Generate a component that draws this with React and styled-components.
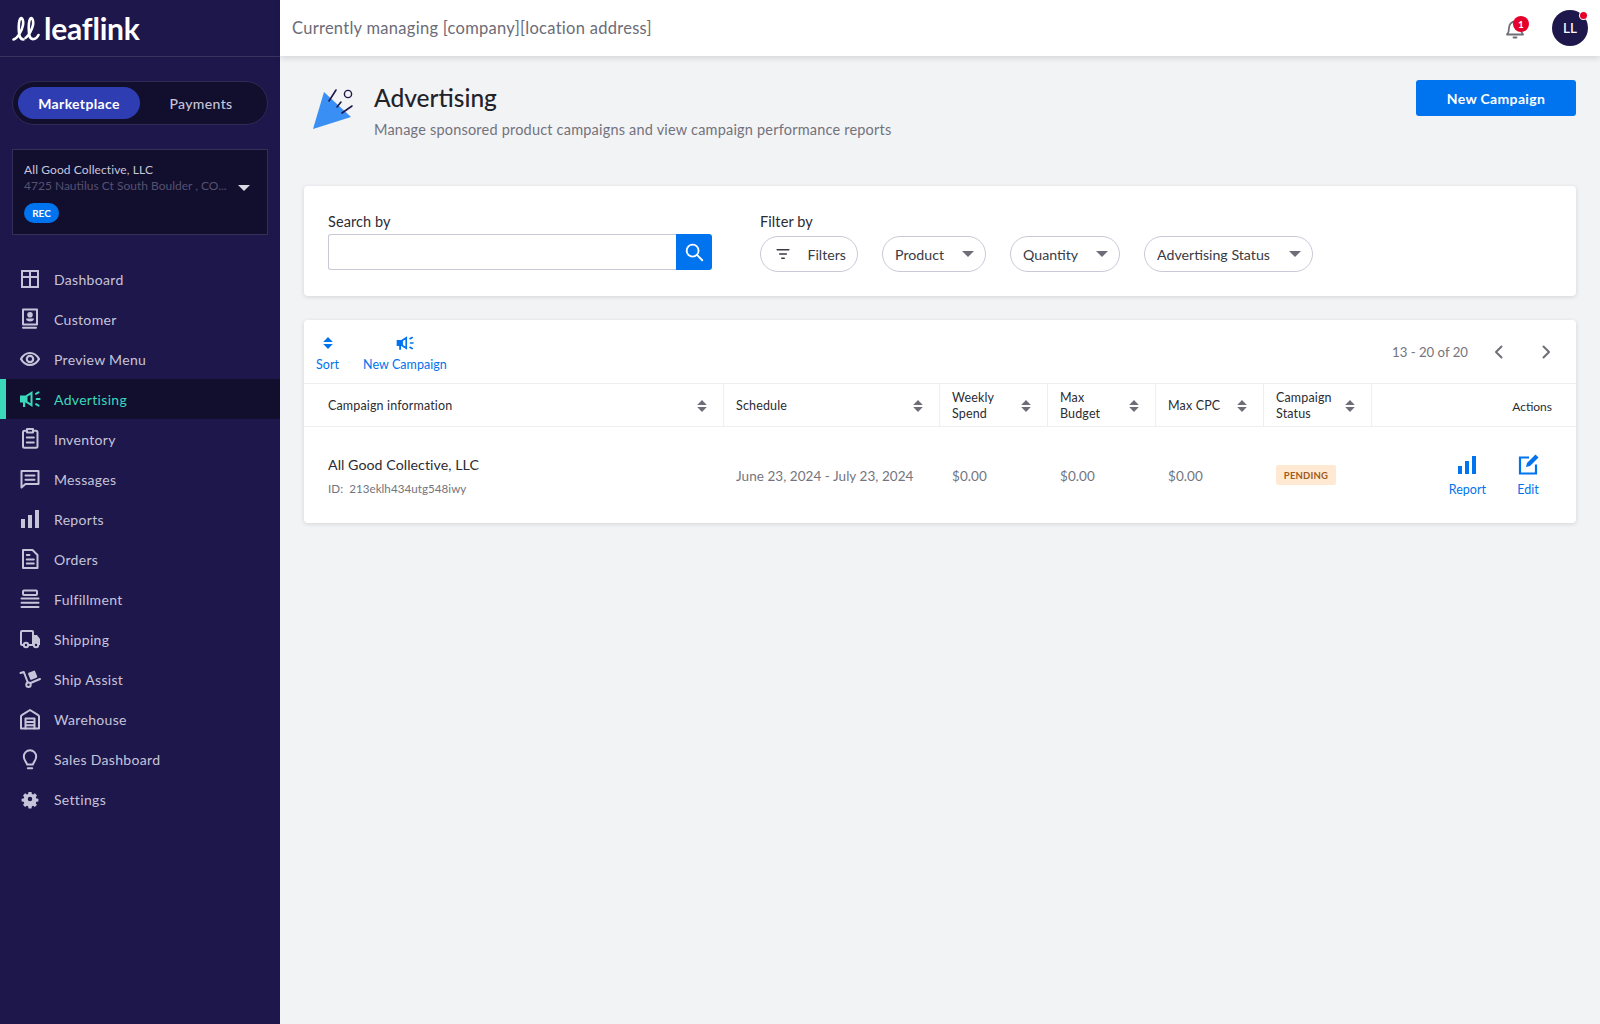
import React from "react";
import styled, { createGlobalStyle } from "styled-components";

const GlobalStyle = createGlobalStyle`
  html, body { margin: 0; padding: 0; height: 100%; }
  body { font-family: "Lato", "Liberation Sans", sans-serif; background: #f2f3f5; color: #22222b; }
  * { box-sizing: border-box; }
`;

const Page = styled.div`
  display: grid;
  grid-template-columns: 280px 1fr;
  height: 1024px;
  overflow: hidden;
`;

const Sidebar = styled.aside`
  background: #1e174b;
  color: #c6c4d9;
  display: flex;
  flex-direction: column;
`;

const LogoBar = styled.div`
  height: 57px;
  padding: 0 0 0 12px;
  display: flex;
  align-items: center;
  gap: 4px;
  border-bottom: 1px solid #38335f;
`;

const LogoText = styled.span`
  color: #fff;
  font-size: 30px;
  font-weight: 700;
  letter-spacing: -0.2px;
  line-height: 1;
`;

const Toggle = styled.div`
  margin: 24px 12px 0;
  height: 44px;
  border-radius: 22px;
  background: #120e2e;
  border: 1px solid #2e2a55;
  padding: 5px;
  display: grid;
  grid-template-columns: 122px 1fr;
`;

const ToggleItem = styled.div`
  display: flex;
  align-items: center;
  justify-content: center;
  padding-top: 1px;
  border-radius: 16px;
  font-size: 14px;
  font-weight: ${(p) => (p.$active ? 700 : 500)};
  color: ${(p) => (p.$active ? "#fff" : "#c6c4d9")};
  background: ${(p) => (p.$active ? "#2f3db3" : "transparent")};
  letter-spacing: 0.35px;
`;

const Account = styled.div`
  position: relative;
  margin: 24px 12px 0;
  height: 86px;
  background: #120e2e;
  border: 1px solid #34305a;
  padding: 12px 11px;
`;

const AccountName = styled.div`
  font-size: 12px;
  line-height: 16px;
  letter-spacing: 0.1px;
  color: #c9c7da;
`;

const AccountAddress = styled.div`
  font-size: 12px;
  line-height: 16px;
  color: #55516f;
`;

const RecPill = styled.span`
  display: inline-flex;
  align-items: center;
  justify-content: center;
  margin-top: 9px;
  width: 35px;
  height: 20px;
  border-radius: 10px;
  background: #0073ee;
  color: #fff;
  font-size: 10px;
  font-weight: 700;
`;

const AccountCaret = styled.span`
  position: absolute;
  right: 17px;
  top: 35px;
  width: 0;
  height: 0;
  border-left: 6px solid transparent;
  border-right: 6px solid transparent;
  border-top: 6px solid #d8d7e3;
`;

const Menu = styled.nav`
  margin-top: 24px;
  display: flex;
  flex-direction: column;
`;

const MenuRow = styled.div`
  height: 40px;
  padding-left: 18px;
  display: flex;
  align-items: center;
  gap: 12px;
  font-size: 14px;
  letter-spacing: 0.32px;
  color: ${(p) => (p.$active ? "#3ad9bb" : "#c6c4d9")};
  background: ${(p) => (p.$active ? "#120e2e" : "transparent")};
  box-shadow: ${(p) => (p.$active ? "inset 6px 0 0 #3ad9bb" : "none")};
`;

const MenuLabel = styled.span`
  margin-top: 1px;
`;

const Svg = styled.svg`
  display: block;
  flex: none;
  width: ${(p) => p.$size || 24}px;
  height: ${(p) => p.$size || 24}px;
  color: ${(p) => p.$color || "currentColor"};
`;

const Main = styled.main`
  display: flex;
  flex-direction: column;
  min-width: 0;
`;

const TopBar = styled.header`
  height: 56px;
  flex: none;
  background: #fff;
  box-shadow: 0 2px 6px rgba(30, 30, 50, 0.14);
  padding: 0 12px;
  display: flex;
  align-items: center;
  justify-content: space-between;
  position: relative;
`;

const Managing = styled.div`
  font-size: 16.5px;
  color: #6c6c77;
  letter-spacing: 0.28px;
`;

const TopRight = styled.div`
  display: flex;
  align-items: center;
  gap: 25px;
`;

const BellWrap = styled.div`
  position: relative;
  width: 24px;
  height: 24px;
  color: #6e6e78;
`;

const BellBadge = styled.span`
  position: absolute;
  top: 0;
  right: -2px;
  width: 16px;
  height: 16px;
  border-radius: 50%;
  background: #e4002b;
  color: #fff;
  font-size: 10px;
  font-weight: 700;
  display: flex;
  align-items: center;
  justify-content: center;
`;

const Avatar = styled.div`
  position: relative;
  width: 36px;
  height: 36px;
  border-radius: 50%;
  background: #1e174b;
  color: #fff;
  font-size: 13.5px;
  font-weight: 500;
  display: flex;
  align-items: center;
  justify-content: center;
  &::after {
    content: "";
    position: absolute;
    top: 2px;
    right: 1px;
    width: 7px;
    height: 7px;
    border-radius: 50%;
    background: #e4002b;
    box-shadow: 0 0 0 1px #fff;
  }
`;

const Content = styled.div`
  padding: 24px 24px 0;
`;

const Head = styled.div`
  height: 106px;
  display: flex;
  align-items: flex-start;
  justify-content: space-between;
`;

const HeadLeft = styled.div`
  display: flex;
  align-items: flex-start;
  gap: 18px;
  padding-left: 8px;
`;

const HeadIcon = styled.svg`
  display: block;
  width: 44px;
  height: 44px;
  margin-top: 8px;
`;

const Title = styled.h1`
  margin: 0;
  font-size: 24.5px;
  line-height: 36px;
  font-weight: 500;
  color: #22222b;
`;

const Subtitle = styled.p`
  margin: 4px 0 0;
  font-size: 14.5px;
  line-height: 20px;
  letter-spacing: 0.2px;
  color: #72727c;
`;

const PrimaryButton = styled.button`
  width: 160px;
  height: 36px;
  border: 0;
  border-radius: 3px;
  background: #0073ee;
  color: #fff;
  font: 700 14px "Lato", sans-serif;
  letter-spacing: 0.35px;
`;

const Card = styled.section`
  background: #fff;
  border-radius: 4px;
  box-shadow: 0 1px 4px rgba(30, 30, 50, 0.14);
`;

const FilterCard = styled(Card)`
  height: 110px;
  padding: 26px 24px 0;
  display: flex;
  gap: 48px;
`;

const FieldLabel = styled.div`
  font-size: 14.5px;
  line-height: 20px;
  letter-spacing: 0.1px;
  color: #2c2c35;
`;

const SearchBox = styled.div`
  margin-top: 2px;
  width: 384px;
  height: 36px;
  display: flex;
`;

const SearchInput = styled.input`
  flex: 1;
  min-width: 0;
  border: 1px solid #c8c9d6;
  border-right: 0;
  border-radius: 3px 0 0 3px;
  background: #fff;
  outline: none;
`;

const SearchButton = styled.button`
  width: 36px;
  border: 0;
  padding: 0;
  border-radius: 0 3px 3px 0;
  background: #0073ee;
  color: #fff;
  display: flex;
  align-items: center;
  justify-content: center;
`;

const Pills = styled.div`
  margin-top: 4px;
  display: flex;
  gap: 24px;
`;

const Pill = styled.div`
  width: ${(p) => p.$width}px;
  height: 36px;
  padding: 0 11px 0 12px;
  border: 1px solid #c8c9d6;
  border-radius: 18px;
  font-size: 14.2px;
  color: #3a3a44;
  display: flex;
  align-items: center;
  justify-content: space-between;
`;

const Caret = styled.span`
  width: 0;
  height: 0;
  border-left: 6px solid transparent;
  border-right: 6px solid transparent;
  border-top: 6px solid #6e6e78;
`;

const TableCard = styled(Card)`
  margin-top: 24px;
`;

const Toolbar = styled.div`
  height: 63px;
  padding: 13px 18px 0 12px;
  display: flex;
  justify-content: space-between;
`;

const ToolGroup = styled.div`
  display: flex;
  gap: 24px;
`;

const ToolItem = styled.div`
  display: flex;
  flex-direction: column;
  align-items: center;
  gap: 4px;
  color: #0073ee;
  font-size: 12.5px;
  line-height: 16px;
  letter-spacing: 0.05px;
`;

const ToolIcon = styled.div`
  height: 20px;
  display: flex;
  align-items: center;
`;

const Pager = styled.div`
  display: flex;
  align-items: center;
  height: 38px;
  color: #74747e;
  font-size: 13.2px;
`;

const PagerButtons = styled.div`
  display: flex;
  gap: 23px;
  margin-left: 19px;
`;

const Grid = styled.div`
  display: grid;
  grid-template-columns: 420px 216px repeat(4, 108px) 1fr;
`;

const HeadRow = styled(Grid)`
  height: 44px;
  border-top: 1px solid #eeeff1;
  border-bottom: 1px solid #eeeff1;
`;

const HeadCell = styled.div`
  padding: 2px 15px 0 ${(p) => (p.$first ? 24 : 12)}px;
  border-right: 1px solid #eeeff1;
  display: flex;
  align-items: center;
  justify-content: space-between;
  font-size: 12.5px;
  line-height: 16px;
  letter-spacing: 0.15px;
  color: #2c2c35;
`;

const ActionsHead = styled.div`
  padding: 2px 24px 0 0;
  display: flex;
  align-items: center;
  justify-content: flex-end;
  font-size: 12px;
  color: #2c2c35;
`;

const BodyRow = styled(Grid)`
  height: 96px;
`;

const BodyCell = styled.div`
  padding: ${(p) => (p.$first ? 0 : 2)}px 0 0 ${(p) => (p.$first ? 24 : 12)}px;
  display: flex;
  flex-direction: column;
  justify-content: center;
  align-items: flex-start;
  font-size: 13.5px;
  letter-spacing: 0.05px;
  color: #74747e;
`;

const RowName = styled.div`
  margin-top: 4px;
  font-size: 14.2px;
  line-height: 20px;
  color: #2c2c35;
  margin-bottom: 4px;
`;

const RowId = styled.div`
  font-size: 11.6px;
  line-height: 20px;
  color: #74747e;
  white-space: pre;
`;

const StatusBadge = styled.span`
  width: 60px;
  height: 20px;
  margin-top: -2px;
  border-radius: 2px;
  background: #ffe9d2;
  color: #a05a1c;
  font-size: 9.5px;
  font-weight: 700;
  letter-spacing: 0.2px;
  display: flex;
  align-items: center;
  justify-content: center;
`;

const ActionCell = styled.div`
  display: flex;
  justify-content: flex-end;
  align-items: flex-start;
  gap: 30px;
  padding: 26px 36px 0 0;
`;

const ActionItem = styled.div`
  display: flex;
  flex-direction: column;
  align-items: center;
  gap: 5px;
  color: #0073ee;
  font-size: 12.5px;
  line-height: 16px;
`;

// svg drawings
const Line = ({ children, size = 24, color, sw = 2, box = "0 0 24 24" }) => (
  <Svg
    $size={size}
    $color={color}
    viewBox={box}
    fill="none"
    stroke="currentColor"
    strokeWidth={sw}
    strokeLinecap="round"
    strokeLinejoin="round"
  >
    {children}
  </Svg>
);

const Megaphone = ({ size = 24 }) => (
  <Svg $size={size} viewBox="0 0 24 24" fill="currentColor">
    <path
      fillRule="evenodd"
      d="M2 8.5h5.500L14.500 4v16l-7-4.500H7.200V20H5v-4.500H2zM9.500 9.600v4.800l3 1.900V7.700z"
    />
    <path
      d="M18 6.800l2.600-1.400M18.600 12h3M18 17.200l2.600 1.400"
      stroke="currentColor"
      strokeWidth="2"
      strokeLinecap="round"
      fill="none"
    />
  </Svg>
);

const icons = {
  dashboard: (
    <Line>
      <path d="M4 4h16v16H4zM4 10h16M12 4v16" strokeLinejoin="miter" />
    </Line>
  ),
  customer: (
    <Line>
      <path d="M5 2.500h14v15H5z" />
      <path d="M5 20.800h13" />
      <circle cx="12" cy="7.800" r="1.800" fill="currentColor" />
      <path d="M8 11.500h8c0 1.800-1.800 3-4 3s-4-1.200-4-3z" fill="currentColor" stroke="none" />
    </Line>
  ),
  eye: (
    <Line sw={2.200}>
      <path d="M3 12c2.200-4 5.200-6 9-6s6.800 2 9 6c-2.200 4-5.200 6-9 6s-6.800-2-9-6z" />
      <circle cx="12" cy="12" r="3.200" />
    </Line>
  ),
  ad: <Megaphone />,
  inventory: (
    <Line>
      <rect x="5" y="3.800" width="14.500" height="17" rx="1.500" />
      <path d="M9 2h6v3.500H9z" fill="#1e174b" />
      <path d="M8.800 10.500h7M8.800 15.500h7" />
    </Line>
  ),
  messages: (
    <Line>
      <path d="M3.500 4h17v13H7.500l-4 3.500z" />
      <path d="M7.500 8.500h9M7.500 12.800h9" />
    </Line>
  ),
  reports: (
    <Svg viewBox="0 0 24 24" fill="currentColor">
      <path d="M3 12h4v9H3zM10 8h4v13h-4zM17 3h4v18h-4z" />
    </Svg>
  ),
  orders: (
    <Line>
      <path d="M5 3h9.500L19.500 8v13H5z" />
      <path d="M8.800 8h2.700M8.800 12.500h7M8.800 16.500h7" />
    </Line>
  ),
  fulfillment: (
    <Line>
      <rect x="5" y="3.500" width="14" height="4.500" rx="1" />
      <path d="M3.500 11.500h17M3.500 15.800h17M3.500 20h17" />
    </Line>
  ),
  shipping: (
    <Line>
      <path d="M5 18H4c-.8 0-1-.5-1-1V5c0-.6.4-1 1-1h10c.6 0 1 .4 1 1v13H11" />
      <path d="M15.500 8H19l3 4v6h-7.500z" fill="currentColor" stroke="none" />
      <circle cx="8" cy="18" r="2.200" fill="#1e174b" />
      <circle cx="18" cy="18" r="2.200" fill="#1e174b" />
    </Line>
  ),
  assist: (
    <Line>
      <path d="M2.500 6l3.300-1 4 10.500" />
      <path d="M12.500 16l9.500-4" />
      <circle cx="10.500" cy="17.800" r="2.200" />
      <rect x="10.800" y="4.500" width="7.500" height="7.500" rx="1" transform="rotate(-22 14.500 8)" fill="currentColor" stroke="none" />
    </Line>
  ),
  warehouse: (
    <Line>
      <path d="M3 21.500V9.500c0-.5.3-1 .8-1.300L12 3l8.200 5.200c.5.3.8.8.8 1.300v12z" />
      <path d="M7.500 21.500V11.500h9v10M7.500 15h9M7.500 18.300h9" />
    </Line>
  ),
  bulb: (
    <Line>
      <path d="M9 17.500c0-2.200-3.200-3.800-3.200-8a6.200 6.200 0 0 1 12.400 0c0 4.200-3.200 5.800-3.200 8z" />
      <path d="M9.800 21.300h4.400" />
    </Line>
  ),
  gear: (
    <Svg viewBox="-4 -4 32 32" fill="currentColor">
      <path
        fillRule="evenodd"
        d="M10 2.500h4l.5 2.800 1.700.7 2.300-1.600 2.800 2.800-1.600 2.300.7 1.700 2.800.5v3.600l-2.800.5-.7 1.700 1.600 2.300-2.800 2.800-2.300-1.600-1.700.7-.5 2.800h-4l-.5-2.800-1.700-.7-2.300 1.600-2.800-2.800 1.600-2.300-.7-1.700-2.800-.5v-3.600l2.800-.5.7-1.700-1.600-2.300 2.800-2.800 2.300 1.600 1.700-.7zM12 9a3 3 0 1 0 0 6 3 3 0 0 0 0-6z"
      />
    </Svg>
  ),
};

const menuItems = [
  ["dashboard", "Dashboard"],
  ["customer", "Customer"],
  ["eye", "Preview Menu"],
  ["ad", "Advertising", true],
  ["inventory", "Inventory"],
  ["messages", "Messages"],
  ["reports", "Reports"],
  ["orders", "Orders"],
  ["fulfillment", "Fulfillment"],
  ["shipping", "Shipping"],
  ["assist", "Ship Assist"],
  ["warehouse", "Warehouse"],
  ["bulb", "Sales Dashboard"],
  ["gear", "Settings"],
];

const SortIcon = ({ color = "#6e6e78", size = 12 }) => (
  <Svg $size={size} viewBox="0 0 12 12" fill={color}>
    <path d="M6 0l4.800 5H1.200zM6 12L1.200 7h9.600z" />
  </Svg>
);

const LogoMark = () => (
  <Svg $size={28} viewBox="0 0 28 28" fill="none" stroke="#fff" strokeWidth="2.600" strokeLinecap="round">
    <path d="M1.500 25.500c4-1 8.500-8.500 9.500-14.500.8-4.500-1-8-2.500-6.500-2 2-2.200 12-1 17 .6 2.800 2 4 4 4" />
    <path d="M13.500 24c3-2 6.500-8 7.500-13 .8-4.500-1-8-2.500-6.500-2 2-2.200 12-1 17 .6 2.800 2 4 4.500 3.500 2-.3 3.500-2 4.500-4" />
  </Svg>
);

const columns = [
  { label: "Campaign information", first: true },
  { label: "Schedule" },
  { label: ["Weekly", "Spend"] },
  { label: ["Max", "Budget"] },
  { label: "Max CPC" },
  { label: ["Campaign", "Status"] },
];

const App = () => (
  <>
    <GlobalStyle />
    <Page>
      <Sidebar>
        <LogoBar>
          <LogoMark />
          <LogoText>leaflink</LogoText>
        </LogoBar>
        <Toggle>
          <ToggleItem $active>Marketplace</ToggleItem>
          <ToggleItem>Payments</ToggleItem>
        </Toggle>
        <Account>
          <AccountName>All Good Collective, LLC</AccountName>
          <AccountAddress>4725 Nautilus Ct South Boulder , CO...</AccountAddress>
          <RecPill>REC</RecPill>
          <AccountCaret />
        </Account>
        <Menu>
          {menuItems.map(([icon, label, active]) => (
            <MenuRow key={label} $active={active}>
              {icons[icon]}
              <MenuLabel>{label}</MenuLabel>
            </MenuRow>
          ))}
        </Menu>
      </Sidebar>
      <Main>
        <TopBar>
          <Managing>Currently managing [company][location address]</Managing>
          <TopRight>
            <BellWrap>
              <Line sw={1.800}>
                <path d="M4 18.500c1.500-1.500 2-3 2-6.500 0-3.800 2.600-6.500 6-6.500s6 2.700 6 6.500c0 3.500.5 5 2 6.500z" />
                <path d="M10.500 21.500h3" />
              </Line>
              <BellBadge>1</BellBadge>
            </BellWrap>
            <Avatar>LL</Avatar>
          </TopRight>
        </TopBar>
        <Content>
          <Head>
            <HeadLeft>
              <HeadIcon viewBox="312 88 44 44">
                <path d="M313 129l11-37 27 25z" fill="#3a8ff5" />
                <path
                  d="M329 101l7-11M337 107l4-5M342 113l10-7"
                  stroke="#1e174b"
                  strokeWidth="1.600"
                  strokeLinecap="round"
                  fill="none"
                />
                <circle cx="348" cy="94" r="3.600" fill="none" stroke="#1e174b" strokeWidth="1.400" />
              </HeadIcon>
              <div>
                <Title>Advertising</Title>
                <Subtitle>Manage sponsored product campaigns and view campaign performance reports</Subtitle>
              </div>
            </HeadLeft>
            <PrimaryButton>New Campaign</PrimaryButton>
          </Head>

          <FilterCard>
            <div>
              <FieldLabel>Search by</FieldLabel>
              <SearchBox>
                <SearchInput />
                <SearchButton>
                  <Line size={22} sw={2}>
                    <circle cx="10.500" cy="10.500" r="6.500" />
                    <path d="M15.500 15.500l5.500 5.500" />
                  </Line>
                </SearchButton>
              </SearchBox>
            </div>
            <div>
              <FieldLabel>Filter by</FieldLabel>
              <Pills>
                <Pill $width={98}>
                  <Line size={20} color="#3a3a44" sw={1.800}>
                    <path d="M5 7h14M8 12h8M10.500 17h3" />
                  </Line>
                  Filters
                </Pill>
                <Pill $width={104}>
                  Product
                  <Caret />
                </Pill>
                <Pill $width={110}>
                  Quantity
                  <Caret />
                </Pill>
                <Pill $width={169}>
                  Advertising Status
                  <Caret />
                </Pill>
              </Pills>
            </div>
          </FilterCard>

          <TableCard>
            <Toolbar>
              <ToolGroup>
                <ToolItem>
                  <ToolIcon>
                    <SortIcon color="#0073ee" />
                  </ToolIcon>
                  Sort
                </ToolItem>
                <ToolItem>
                  <ToolIcon>
                    <Megaphone size={20} />
                  </ToolIcon>
                  New Campaign
                </ToolItem>
              </ToolGroup>
              <Pager>
                13 - 20 of 20
                <PagerButtons>
                  <Line color="#6e6e78" sw={2}>
                    <path d="M14.500 6.500L9 12l5.500 5.500" />
                  </Line>
                  <Line color="#6e6e78" sw={2}>
                    <path d="M9.500 6.500L15 12l-5.500 5.500" />
                  </Line>
                </PagerButtons>
              </Pager>
            </Toolbar>
            <HeadRow>
              {columns.map((c, i) => (
                <HeadCell key={i} $first={c.first}>
                  <span>
                    {Array.isArray(c.label) ? (
                      <>
                        {c.label[0]}
                        <br />
                        {c.label[1]}
                      </>
                    ) : (
                      c.label
                    )}
                  </span>
                  <SortIcon />
                </HeadCell>
              ))}
              <ActionsHead>Actions</ActionsHead>
            </HeadRow>
            <BodyRow>
              <BodyCell $first>
                <RowName>All Good Collective, LLC</RowName>
                <RowId>ID:  213eklh434utg548iwy</RowId>
              </BodyCell>
              <BodyCell>June 23, 2024 - July 23, 2024</BodyCell>
              <BodyCell>$0.00</BodyCell>
              <BodyCell>$0.00</BodyCell>
              <BodyCell>$0.00</BodyCell>
              <BodyCell>
                <StatusBadge>PENDING</StatusBadge>
              </BodyCell>
              <ActionCell>
                <ActionItem>
                  <Svg viewBox="0 0 24 24" fill="currentColor">
                    <path d="M3 13h4v8H3zM10 8h4v13h-4zM17 3h4v18h-4z" />
                  </Svg>
                  Report
                </ActionItem>
                <ActionItem>
                  <Svg viewBox="0 0 24 24" fill="none">
                    <path d="M13 4.500H4v16h16v-9" stroke="currentColor" strokeWidth="2.200" />
                    <path d="M19.500 1.500l3 3L14 13l-4 1 1-4z" fill="currentColor" />
                  </Svg>
                  Edit
                </ActionItem>
              </ActionCell>
            </BodyRow>
          </TableCard>
        </Content>
      </Main>
    </Page>
  </>
);

export default App;
